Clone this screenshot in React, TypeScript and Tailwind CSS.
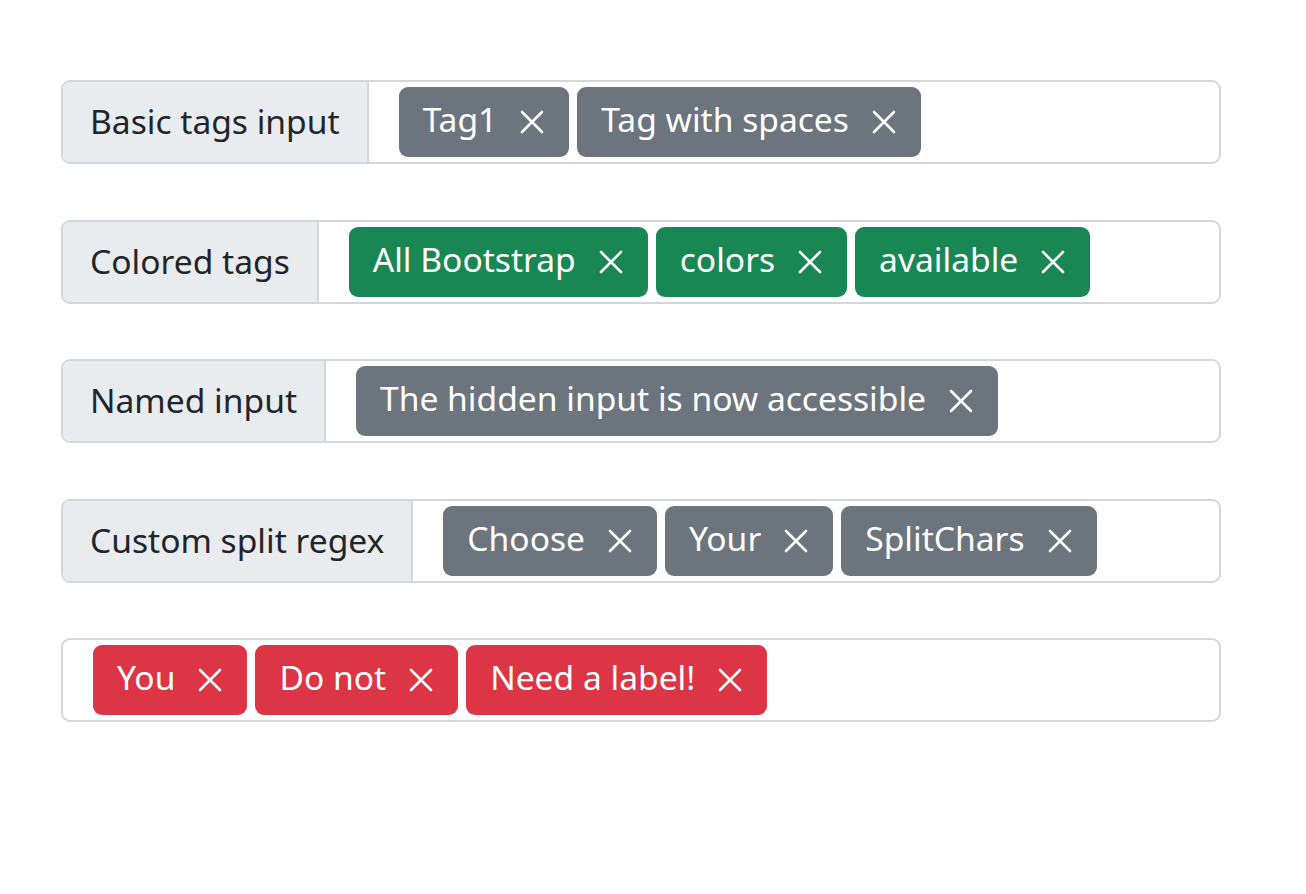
type Tag = { text: string; color: string };

const rows: { label?: string; tags: Tag[] }[] = [
  {
    label: "Basic tags input",
    tags: [
      { text: "Tag1", color: "bg-[#6c757d]" },
      { text: "Tag with spaces", color: "bg-[#6c757d]" },
    ],
  },
  {
    label: "Colored tags",
    tags: [
      { text: "All Bootstrap", color: "bg-[#198754]" },
      { text: "colors", color: "bg-[#198754]" },
      { text: "available", color: "bg-[#198754]" },
    ],
  },
  {
    label: "Named input",
    tags: [{ text: "The hidden input is now accessible", color: "bg-[#6c757d]" }],
  },
  {
    label: "Custom split regex",
    tags: [
      { text: "Choose", color: "bg-[#6c757d]" },
      { text: "Your", color: "bg-[#6c757d]" },
      { text: "SplitChars", color: "bg-[#6c757d]" },
    ],
  },
  {
    tags: [
      { text: "You", color: "bg-[#dc3545]" },
      { text: "Do not", color: "bg-[#dc3545]" },
      { text: "Need a label!", color: "bg-[#dc3545]" },
    ],
  },
];

function CloseIcon() {
  return (
    <svg width="26" height="26" viewBox="0 0 26 26" className="shrink-0">
      <path d="M3 3 L23 23 M23 3 L3 23" stroke="white" strokeWidth="2.6" strokeLinecap="round" />
    </svg>
  );
}

export default function App() {
  return (
    <div className="min-h-[894px] bg-white pt-[80px] pl-[61px] font-['Segoe_UI','Noto_Sans',sans-serif] text-[33.6px] text-[#212529]">
      <div className="flex w-[1160px] flex-col gap-[55.5px]">
        {rows.map((row, i) => (
          <div key={i} className="flex h-[84px] overflow-hidden rounded-[9px] border-2 border-[#d3d7dc]">
            {row.label && (
              <div className="flex items-center border-r-2 border-[#d3d7dc] bg-[#e9ecef] px-[27px] leading-none">
                {row.label}
              </div>
            )}
            <div className="flex flex-1 items-center gap-[8px] pl-[30px]">
              {row.tags.map((tag) => (
                <span
                  key={tag.text}
                  className={`flex h-[70px] items-center gap-[22px] rounded-[9px] px-[24px] leading-none text-white ${tag.color}`}
                >
                  <span className="-mt-[4px]">{tag.text}</span>
                  <CloseIcon />
                </span>
              ))}
            </div>
          </div>
        ))}
      </div>
    </div>
  );
}
